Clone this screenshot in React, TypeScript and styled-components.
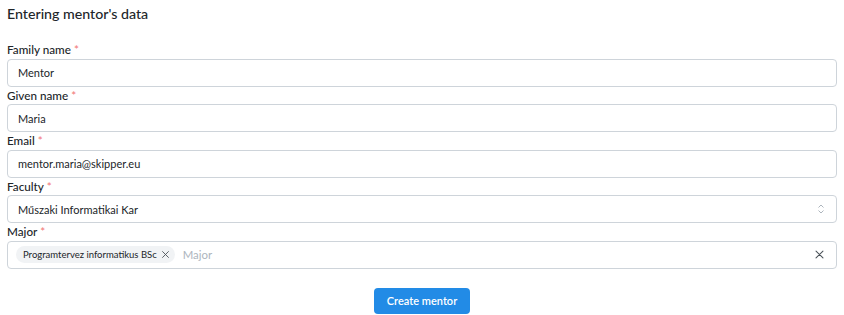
import styled, { createGlobalStyle } from 'styled-components';

const Global = createGlobalStyle`
  body {
    margin: 0;
    background: #fff;
    font-family: "Segoe UI", Lato, "Liberation Sans", sans-serif;
    color: #212529;
  }
`;

const Page = styled.div`
  padding: 0 7px;
`;

const Title = styled.h3`
  margin: 0;
  padding-top: 3px;
  height: 38px;
  font-size: 14.2px;
  font-weight: 500;
  line-height: 22px;
  color: #212529;
`;

const Form = styled.form`
  display: flex;
  flex-direction: column;
`;

const Field = styled.div`
  display: flex;
  flex-direction: column;
`;

const Label = styled.label`
  font-size: 11.7px;
  font-weight: 500;
  line-height: 17.5px;
  color: #212529;
`;

const Required = styled.span`
  color: #f27b7b;
  margin-left: 3px;
`;

const Box = styled.div`
  box-sizing: border-box;
  height: 28px;
  border: 1px solid #ced4da;
  border-radius: 4px;
  display: flex;
  align-items: center;
  padding: 0 10px;
  font-size: 11px;
  color: #212529;
  gap: 8px;
`;

const Value = styled.span`
  flex: 1;
`;

const Placeholder = styled.span`
  color: #adb5bd;
  flex: 1;
  font-size: 11.4px;
`;

const Chip = styled.span`
  display: inline-flex;
  align-items: center;
  gap: 3px;
  height: 17px;
  padding: 0 4px 0 7px;
  margin-left: -2px;
  border-radius: 9px;
  background: #f1f3f5;
  font-size: 9.5px;
  color: #212529;
`;

const Actions = styled.div`
  display: flex;
  justify-content: center;
  padding-top: 19px;
`;

const Button = styled.button`
  height: 26px;
  padding: 0 13px;
  border: none;
  border-radius: 4px;
  background: #228be6;
  color: #fff;
  font-family: inherit;
  font-size: 11px;
  font-weight: 600;
`;

const Icon = styled.svg`
  flex: none;
  color: #495057;
`;

function CloseIcon({ size }: { size: number }) {
  return (
    <Icon width={size} height={size} viewBox="0 0 15 15" fill="none">
      <path
        d="M3.5 3.5l8 8M11.5 3.5l-8 8"
        stroke="currentColor"
        strokeWidth="1.2"
        strokeLinecap="round"
      />
    </Icon>
  );
}

function SelectorIcon() {
  return (
    <Icon width={10} height={12} viewBox="0 0 10 12" fill="none" style={{ color: '#adb5bd' }}>
      <path d="M2.5 4.5L5 2l2.5 2.5M2.5 7.5L5 10l2.5-2.5" stroke="currentColor" strokeWidth="1" />
    </Icon>
  );
}

const fields = [
  { label: 'Family name', value: 'Mentor' },
  { label: 'Given name', value: 'Maria' },
  { label: 'Email', value: 'mentor.maria@skipper.eu' },
];

export default function App() {
  return (
    <>
      <Global />
      <Page>
        <Title>Entering mentor's data</Title>
        <Form onSubmit={(e) => e.preventDefault()}>
          {fields.map((f) => (
            <Field key={f.label}>
              <Label>
                {f.label}
                <Required>*</Required>
              </Label>
              <Box>
                <Value>{f.value}</Value>
              </Box>
            </Field>
          ))}
          <Field>
            <Label>
              Faculty<Required>*</Required>
            </Label>
            <Box>
              <Value>Műszaki Informatikai Kar</Value>
              <SelectorIcon />
            </Box>
          </Field>
          <Field>
            <Label>
              Major<Required>*</Required>
            </Label>
            <Box>
              <Chip>
                Programtervez informatikus BSc
                <CloseIcon size={11} />
              </Chip>
              <Placeholder>Major</Placeholder>
              <CloseIcon size={13} />
            </Box>
          </Field>
          <Actions>
            <Button type="submit">Create mentor</Button>
          </Actions>
        </Form>
      </Page>
    </>
  );
}
